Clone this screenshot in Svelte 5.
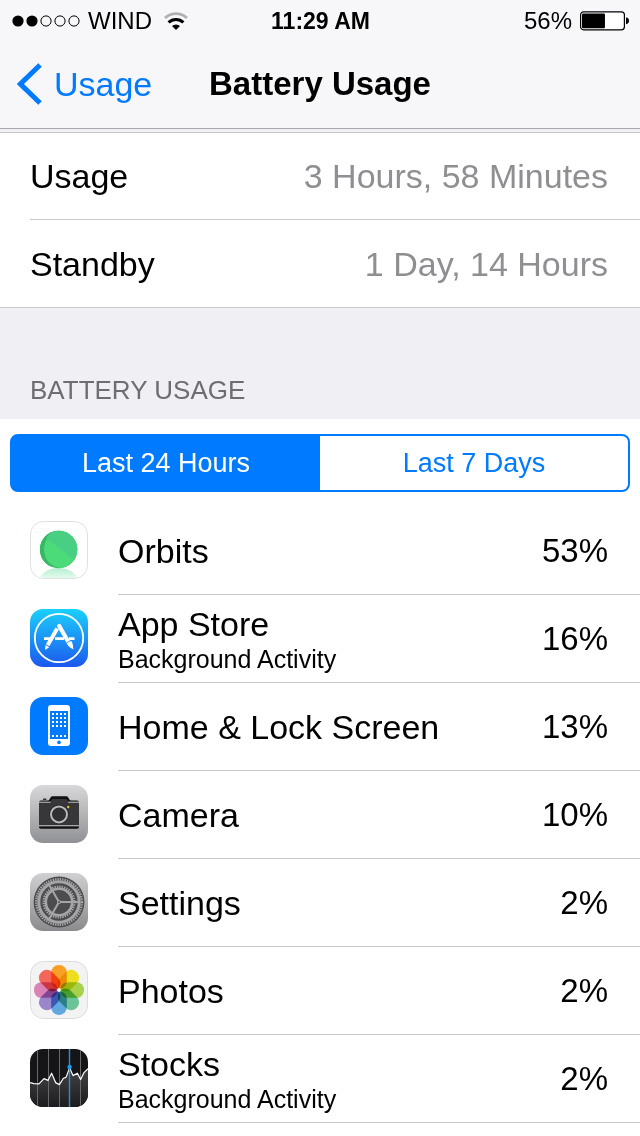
<script lang="ts">
    type IconName = 'orbits' | 'appstore' | 'home' | 'camera' | 'settings' | 'photos' | 'stocks';

    type AppUsage = {
        name: string;
        icon: IconName;
        percent: number;
        note?: string;
    };

    let period = $state<'day' | 'week'>('day');

    const signal = [true, true, false, false, false];
    const batteryLevel = 56;

    const apps: AppUsage[] = [
        { name: 'Orbits', icon: 'orbits', percent: 53 },
        { name: 'App Store', icon: 'appstore', percent: 16, note: 'Background Activity' },
        { name: 'Home & Lock Screen', icon: 'home', percent: 13 },
        { name: 'Camera', icon: 'camera', percent: 10 },
        { name: 'Settings', icon: 'settings', percent: 2 },
        { name: 'Photos', icon: 'photos', percent: 2 },
        { name: 'Stocks', icon: 'stocks', percent: 2, note: 'Background Activity' },
    ];

    const petals = ['#fba027', '#ecdf1e', '#a9d14c', '#6cc398', '#62a8e0', '#9a86cc', '#d983b6', '#f4665a'];
    const dotColumns = [22, 26, 30, 34];
    const dotRows = [16, 20, 24, 28, 38];
</script>

<div class="screen">
    <header>
        <div class="status">
            <div class="carrier">
                <svg width="68" height="14" viewBox="0 0 68 14" aria-hidden="true">
                    {#each signal as on, i}
                        {#if on}
                            <circle cx={6 + i * 14} cy="7" r="5.6" fill="#000" />
                        {:else}
                            <circle cx={6 + i * 14} cy="7" r="5.1" fill="none" stroke="#000" />
                        {/if}
                    {/each}
                </svg>
                <span>WIND</span>
                <svg class="wifi" width="24" height="18" viewBox="0 0 24 18" aria-hidden="true">
                    <path d="M12 18 L8 14 A5.8 5.8 0 0 1 16 14 Z" fill="#000" />
                    <path d="M4.6 10.4 A10.6 10.6 0 0 1 19.4 10.4" fill="none" stroke="#000" stroke-width="3" />
                    <path d="M1 6 A15.8 15.8 0 0 1 23 6" fill="none" stroke="#b0b0b3" stroke-width="2.8" />
                </svg>
            </div>
            <time>11:29 AM</time>
            <div class="battery">
                <span>{batteryLevel}%</span>
                <svg width="49" height="20" viewBox="0 0 49 20" aria-hidden="true">
                    <rect x="0.6" y="0.8" width="43.8" height="18" rx="3" fill="#fff" stroke="#000" stroke-width="1.2" />
                    <rect x="2" y="2.4" width={batteryLevel * 0.41} height="14.8" rx="1" fill="#000" />
                    <path d="M46 6.6 Q49 7 49 9.8 Q49 12.8 46 13.2 Z" fill="#000" />
                </svg>
            </div>
        </div>
        <nav>
            <a class="back" href="#usage">
                <svg width="25" height="42" viewBox="0 0 25 42" aria-hidden="true">
                    <path d="M23 2 L3.4 21 L23 40" fill="none" stroke="#007aff" stroke-width="5" />
                </svg>
                <span>Usage</span>
            </a>
            <h1>Battery Usage</h1>
        </nav>
    </header>

    <dl class="totals">
        <div class="total">
            <dt>Usage</dt>
            <dd>3 Hours, 58 Minutes</dd>
        </div>
        <div class="total">
            <dt>Standby</dt>
            <dd>1 Day, 14 Hours</dd>
        </div>
    </dl>

    <h2>BATTERY USAGE</h2>

    <main>
        <div class="segments">
            <button type="button" aria-pressed={period === 'day'} onclick={() => (period = 'day')}>Last 24 Hours</button>
            <button type="button" aria-pressed={period === 'week'} onclick={() => (period = 'week')}>Last 7 Days</button>
        </div>

        <ul>
            {#each apps as app}
                <li>
                    <svg class="icon" width="58" height="58" viewBox="0 0 58 58" aria-hidden="true">
                        {@render icon(app.icon)}
                    </svg>
                    <div class="app">
                        <div class="label">
                            <span class="name">{app.name}</span>
                            {#if app.note}
                                <span class="note">{app.note}</span>
                            {/if}
                        </div>
                        <span class="percent">{app.percent}%</span>
                    </div>
                </li>
            {/each}
        </ul>
    </main>
</div>

{#snippet icon(name: IconName)}
    {#if name === 'orbits'}
        <defs>
            <linearGradient id="orbit-glow" x1="0" y1="0" x2="0" y2="1">
                <stop offset="0" stop-color="#b4efcf" />
                <stop offset="0.5" stop-color="#f4fdf8" />
            </linearGradient>
            <clipPath id="orbit-disc"><circle cx="28.6" cy="28.5" r="18.7" /></clipPath>
            <clipPath id="orbit-tile"><rect x="1" y="1" width="56" height="56" rx="12" /></clipPath>
        </defs>
        <rect x="0.5" y="0.5" width="57" height="57" rx="13" fill="#fff" stroke="#dfe0e3" />
        <ellipse cx="28.6" cy="60" rx="19" ry="13" fill="url(#orbit-glow)" clip-path="url(#orbit-tile)" />
        <g clip-path="url(#orbit-disc)">
            <rect width="58" height="58" fill="#36b866" />
            <circle cx="32.6" cy="28.5" r="18.7" fill="#4bdb78" />
            <path d="M15 16 L48 42 V6 H15 Z" fill="#48cf83" />
            <path d="M9 9 H27 C18 11 14 19 14 28.5 C14 38 18 46 27 48 H9 Z" fill="#36b866" />
        </g>
    {:else if name === 'appstore'}
        <defs>
            <linearGradient id="store-bg" x1="0" y1="0" x2="0" y2="1">
                <stop offset="0" stop-color="#1bd0fb" />
                <stop offset="1" stop-color="#1c58ee" />
            </linearGradient>
        </defs>
        <rect width="58" height="58" rx="13" fill="url(#store-bg)" />
        <g fill="none" stroke="#fff">
            <circle cx="29" cy="29" r="24.2" stroke-width="1.8" />
            <path d="M14 29.6 H20.4 M25 29.6 H34 M39 29.6 H44.5" stroke-width="2.6" />
            <path d="M27.2 19.6 L17.6 36.2" stroke-width="4" />
            <path d="M29.2 17 L39 34" stroke-width="4.2" stroke-linecap="round" />
        </g>
        <path d="M15.4 36 L19.2 38.2 L15.2 41 Z M36.8 34.6 L41.4 32 C43.2 35.2 43 37.4 43.4 40.4 C40.6 39.2 38.6 37.8 36.8 34.6 Z" fill="#fff" />
        <path d="M36.4 34 L41 31.4" stroke="#258cf5" stroke-width="0.9" />
    {:else if name === 'home'}
        <rect width="58" height="58" rx="13" fill="#007aff" />
        <rect x="18" y="8" width="22" height="41" rx="3" fill="#fff" />
        <rect x="20" y="14" width="18" height="28" fill="#007aff" />
        {#each dotRows as y}
            {#each dotColumns as x}
                <rect {x} {y} width="2" height="2" fill="#fff" />
            {/each}
        {/each}
        <circle cx="29" cy="45.4" r="1.8" fill="#007aff" />
    {:else if name === 'camera'}
        <defs>
            <linearGradient id="camera-bg" x1="0" y1="0" x2="0" y2="1">
                <stop offset="0" stop-color="#d8d8da" />
                <stop offset="1" stop-color="#909194" />
            </linearGradient>
        </defs>
        <rect width="58" height="58" rx="13" fill="url(#camera-bg)" />
        <path d="M9 17.6 Q9 15.6 11 15.6 H17.4 Q19 15.6 20 13.4 Q20.8 11.2 22.4 11.2 H36.4 Q38 11.2 38.8 13.4 Q39.8 15.6 41.4 15.6 H47 Q49 15.6 49 17.6 V42 Q49 43.8 47 43.8 H11 Q9 43.8 9 42 Z" fill="#111" />
        <rect x="13" y="13.6" width="3.4" height="1.2" fill="#111" />
        <path d="M9 17.4 H19.6 C21 17.2 21.4 14.2 23 14 H36 C37.6 14.2 38 17.2 39.4 17.4 H49 V41 H9 Z" fill="#37373a" />
        <path d="M9 17.2 H49 M9 40.8 H49" stroke="#d2d2d4" stroke-width="1" />
        <rect x="20.6" y="15.6" width="17.6" height="3" fill="#37373a" />
        <circle cx="29" cy="29.4" r="9.6" fill="#222224" />
        <circle cx="29" cy="29.4" r="8" fill="#303033" stroke="#b9b9bc" stroke-width="2" />
        <circle cx="38.2" cy="22" r="1.2" fill="#d6c81c" />
    {:else if name === 'settings'}
        <defs>
            <linearGradient id="gear-bg" x1="0" y1="0" x2="0" y2="1">
                <stop offset="0" stop-color="#d0d0d2" />
                <stop offset="1" stop-color="#8b8b8e" />
            </linearGradient>
        </defs>
        <rect width="58" height="58" rx="13" fill="url(#gear-bg)" />
        <g fill="none">
            <circle cx="29" cy="29" r="25.4" fill="#4c4c4f" />
            <circle cx="29" cy="29" r="22.8" stroke="#a5a5a8" stroke-width="2.4" stroke-dasharray="1.4 0.99" />
            <circle cx="29" cy="29" r="20.2" stroke="#a5a5a8" stroke-width="3" />
            <circle cx="29" cy="29" r="14.8" stroke="#a5a5a8" stroke-width="3.4" stroke-dasharray="1.3 1.02" />
            <circle cx="29" cy="29" r="13.2" stroke="#a5a5a8" stroke-width="2.6" />
            <path d="M29 29 H49 M29 29 L19 11.7 M29 29 L19 46.3" stroke="#a5a5a8" stroke-width="2" />
            <circle cx="29" cy="29" r="2" fill="#a5a5a8" />
            <circle cx="29" cy="29" r="0.9" fill="#4c4c4f" />
        </g>
    {:else if name === 'photos'}
        <rect x="0.5" y="0.5" width="57" height="57" rx="13" fill="#f3f3f4" stroke="#dcdcde" />
        <g class="petals">
            {#each petals as color, i}
                <rect x="21.2" y="4" width="15.6" height="23.6" rx="7.4" fill={color} transform="rotate({i * 45} 29 29)" />
            {/each}
        </g>
        <circle cx="29" cy="29" r="1.8" fill="#fff" />
    {:else}
        <defs>
            <linearGradient id="stocks-area" x1="0" y1="0" x2="0" y2="1">
                <stop offset="0" stop-color="#444447" />
                <stop offset="1" stop-color="#1c1c1e" />
            </linearGradient>
            <clipPath id="stocks-tile"><rect width="58" height="58" rx="13" /></clipPath>
        </defs>
        <g clip-path="url(#stocks-tile)">
            <rect width="58" height="58" fill="#151517" />
            <path d="M0 33.6 L4 34.6 L9 34.8 L14 29.6 L18 31.4 L21.6 24.2 L25.6 33.6 L29.4 35.6 L33.4 29.2 L36 28.4 L39.6 19 L43 26.6 L47.4 24.2 L50.6 30.6 L54 23.6 L58 19.6 V58 H0 Z" fill="url(#stocks-area)" />
            <path d="M7.5 0 V58 M18.5 0 V58 M29.5 0 V58 M50.5 0 V58" stroke="#68686b" />
            <path d="M0 33.6 L4 34.6 L9 34.8 L14 29.6 L18 31.4 L21.6 24.2 L25.6 33.6 L29.4 35.6 L33.4 29.2 L36 28.4 L39.6 19 L43 26.6 L47.4 24.2 L50.6 30.6 L54 23.6 L58 19.6" fill="none" stroke="#fff" stroke-width="1.2" stroke-linejoin="round" />
            <path d="M39.5 0 V58" stroke="#1d94dc" stroke-width="1.4" />
            <circle cx="39.6" cy="18" r="2.2" fill="#1d9cea" />
        </g>
    {/if}
{/snippet}

<style>
    :global(body) {
        margin: 0;
        background: #fff;
    }

    .screen {
        min-height: 100vh;
        background: #efeff4;
        color: #000;
        font-family: "Liberation Sans", Arial, sans-serif;
        font-size: 34px;
        line-height: 40px;
        display: flex;
        flex-direction: column;
    }

    header {
        background: #f7f7f9;
        border-bottom: 1px solid #a7a7ab;
        margin-bottom: 3px;
    }

    .status {
        display: grid;
        grid-template-columns: 1fr auto 1fr;
        align-items: center;
        box-sizing: border-box;
        height: 40px;
        padding: 2px 11px 0 12px;
        font-size: 24px;
        line-height: 28px;
    }

    time {
        font-size: 23px;
        font-weight: 700;
    }

    .carrier,
    .battery {
        display: flex;
        align-items: center;
        gap: 8px;
    }

    .wifi {
        margin-left: 4px;
    }

    .battery {
        justify-content: flex-end;
    }

    nav {
        display: grid;
        grid-template-columns: 1fr auto 1fr;
        align-items: center;
        height: 88px;
        padding: 0 17px;
    }

    .back {
        display: flex;
        align-items: center;
        gap: 12px;
        color: #007aff;
        text-decoration: none;
    }

    h1 {
        margin: 0;
        font-size: 33px;
        font-weight: 700;
    }

    .totals {
        margin: 0;
        padding-left: 30px;
        background: #fff;
        border-top: 1px solid #c8c7cc;
        border-bottom: 1px solid #c8c7cc;
    }

    .total {
        display: flex;
        align-items: center;
        justify-content: space-between;
        height: 86px;
        padding-right: 32px;
    }

    .total + .total {
        height: 87px;
        border-top: 1px solid #c8c7cc;
    }

    dd {
        margin: 0;
        color: #8e8e93;
    }

    h2 {
        margin: 0;
        padding: 66px 30px 13px;
        color: #6d6d72;
        font-size: 26px;
        font-weight: 400;
        line-height: 32px;
    }

    main {
        flex: 1;
        padding-top: 15px;
        background: #fff;
    }

    .segments {
        display: grid;
        grid-template-columns: 1fr 1fr;
        height: 58px;
        margin: 0 10px 15px;
        box-sizing: border-box;
        border: 2px solid #007aff;
        border-radius: 8px;
        background: #007aff;
        overflow: hidden;
    }

    .segments button {
        padding: 0;
        border: 0;
        background: #fff;
        color: #007aff;
        font: inherit;
        font-size: 27px;
    }

    .segments button[aria-pressed="true"] {
        background: #007aff;
        color: #fff;
    }

    ul {
        margin: 0;
        padding: 0 0 0 30px;
        list-style: none;
    }

    li {
        display: flex;
        gap: 30px;
    }

    .icon {
        flex: none;
        margin-top: 14px;
    }

    .app {
        flex: 1;
        display: flex;
        align-items: center;
        justify-content: space-between;
        height: 87px;
        padding-right: 32px;
        border-bottom: 1px solid #c8c7cc;
    }

    .label {
        display: flex;
        flex-direction: column;
    }

    .note {
        font-size: 25px;
        line-height: 30px;
    }

    .percent {
        font-size: 33px;
    }

    .petals {
        isolation: isolate;
    }

    .petals rect {
        mix-blend-mode: multiply;
    }
</style>
